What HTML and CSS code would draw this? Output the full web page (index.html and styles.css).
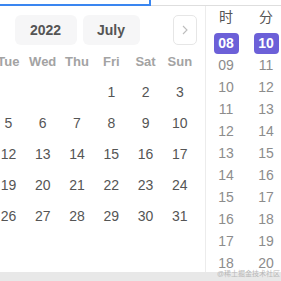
FILE: index.html
```html
<!DOCTYPE html>
<html>

<head>
  <title>Date Time Picker</title>
  <link rel="stylesheet" href="styles.css">
</head>

<body>
  <div class="topline">
    <div class="input"></div>
    <div class="rest"></div>
  </div>

  <div class="panel">
    <div class="calendar">
      <div class="cal-inner">
        <div class="cal-head">
          <div class="nav-btn">
            <svg width="8" height="12" viewBox="0 0 8 12"><path d="M6 2 L2 6 L6 10" fill="none" stroke="#bdbdbd" stroke-width="1.1"/></svg>
          </div>
          <div class="titles">
            <div class="title-btn year">2022</div>
            <div class="title-btn month">July</div>
          </div>
          <div class="nav-btn">
            <svg width="8" height="12" viewBox="0 0 8 12"><path d="M2 2 L6 6 L2 10" fill="none" stroke="#bdbdbd" stroke-width="1.1"/></svg>
          </div>
        </div>

        <div class="week">
          <span>Mon</span><span>Tue</span><span>Wed</span><span>Thu</span><span>Fri</span><span>Sat</span><span>Sun</span>
        </div>

        <div class="days">
          <span></span><span></span><span></span><span></span><span>1</span><span>2</span><span>3</span>
          <span>4</span><span>5</span><span>6</span><span>7</span><span>8</span><span>9</span><span>10</span>
          <span>11</span><span>12</span><span>13</span><span>14</span><span>15</span><span>16</span><span>17</span>
          <span>18</span><span>19</span><span>20</span><span>21</span><span>22</span><span>23</span><span>24</span>
          <span>25</span><span>26</span><span>27</span><span>28</span><span>29</span><span>30</span><span>31</span>
        </div>
      </div>
    </div>

    <div class="time">
      <div class="col">
        <div class="col-head">时</div>
        <div class="item"><b class="active">08</b></div>
        <div class="item">09</div>
        <div class="item">10</div>
        <div class="item">11</div>
        <div class="item">12</div>
        <div class="item">13</div>
        <div class="item">14</div>
        <div class="item">15</div>
        <div class="item">16</div>
        <div class="item">17</div>
        <div class="item">18</div>
      </div>
      <div class="col">
        <div class="col-head">分</div>
        <div class="item"><b class="active">10</b></div>
        <div class="item">11</div>
        <div class="item">12</div>
        <div class="item">13</div>
        <div class="item">14</div>
        <div class="item">15</div>
        <div class="item">16</div>
        <div class="item">17</div>
        <div class="item">18</div>
        <div class="item">19</div>
        <div class="item">20</div>
      </div>
    </div>
  </div>

  <div class="bottombar"></div>
  <div class="watermark">@稀土掘金技术社区</div>
</body>

</html>
```

FILE: styles.css
```css
body {
  margin: 0;
  width: 281px;
  height: 281px;
  overflow: hidden;
  position: relative;
  font-family: 'Liberation Sans', Arial, 'Noto Sans CJK SC', sans-serif;
  background-color: #ffffff;
}

.topline {
  display: flex;
  height: 6px;
}

.input {
  width: 151px;
  height: 6px;
  box-sizing: border-box;
  border-right: 2px solid #3a86f0;
  border-bottom: 2px solid #3a86f0;
}

.rest {
  flex: 1;
  height: 5px;
  border-bottom: 1px solid #dedede;
}

.panel {
  display: flex;
  height: 266px;
  overflow: hidden;
}

.calendar {
  width: 205px;
  flex-shrink: 0;
  overflow: hidden;
}

.cal-inner {
  width: 240px;
  margin-left: -43px;
}

.cal-head {
  display: flex;
  align-items: center;
  height: 30px;
  margin-top: 9px;
}

.nav-btn {
  width: 24px;
  height: 30px;
  box-sizing: border-box;
  border: 1px solid #e6e6e6;
  border-radius: 5px;
  display: flex;
  align-items: center;
  justify-content: center;
}

.titles {
  flex: 1;
  display: flex;
  justify-content: center;
  gap: 6px;
}

.title-btn {
  height: 30px;
  line-height: 30px;
  background-color: #f6f6f7;
  border-radius: 6px;
  text-align: center;
  font-size: 14px;
  font-weight: bold;
  color: #555555;
}

.year {
  width: 62px;
}

.month {
  width: 57px;
}

.week {
  display: grid;
  grid-template-columns: repeat(7, 1fr);
  height: 30px;
  line-height: 30px;
  margin-top: 2px;
  text-align: center;
  font-size: 13px;
  font-weight: bold;
  color: #a3a3a3;
}

.days {
  display: grid;
  grid-template-columns: repeat(7, 1fr);
  grid-auto-rows: 31px;
  line-height: 31px;
  text-align: center;
  font-size: 14px;
  color: #555555;
}

.time {
  display: flex;
  width: 80px;
  flex-shrink: 0;
  border-left: 1px solid #ececec;
  overflow: hidden;
}

.col {
  width: 40px;
  flex-shrink: 0;
  text-align: center;
  font-size: 14px;
  color: #8c8c8c;
}

.col-head {
  height: 22px;
  line-height: 22px;
  color: #555555;
  margin-bottom: 4px;
}

.item {
  height: 22px;
  line-height: 22px;
}

.active {
  display: inline-block;
  width: 25px;
  height: 21px;
  line-height: 21px;
  border-radius: 4px;
  background-color: #6c60d8;
  color: #ffffff;
  font-weight: bold;
}

.bottombar {
  height: 9px;
  background-color: #e8e8e8;
}

.watermark {
  position: absolute;
  right: 1px;
  bottom: 4px;
  line-height: 7px;
  font-size: 7px;
  color: #b8b8b8;
}
```
